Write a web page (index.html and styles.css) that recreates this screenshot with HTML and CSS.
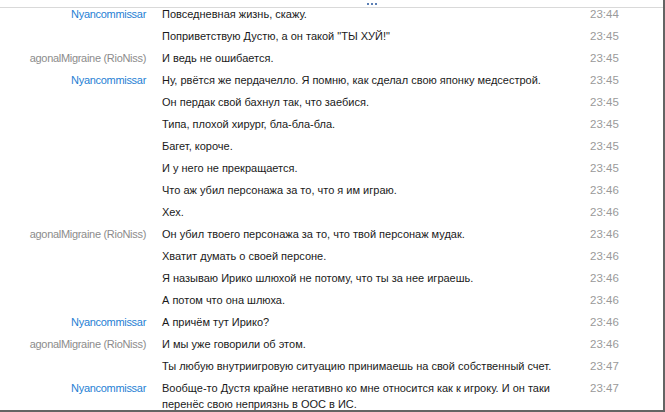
FILE: index.html
```html
<!DOCTYPE html>
<html>
<head>
<meta charset="utf-8">
<link rel="stylesheet" href="styles.css">
</head>
<body>
<div class="frame">
  <div class="header"><span class="dots"><i></i><i></i><i></i></span></div>
  <div class="log">
    <div class="row"><span class="name nyan">Nyancommissar</span><span class="msg">Повседневная жизнь, скажу.</span><span class="time">23:44</span></div>
    <div class="row"><span class="name"></span><span class="msg">Поприветствую Дустю, а он такой "ТЫ ХУЙ!"</span><span class="time">23:45</span></div>
    <div class="row"><span class="name agon">agonalMigraine (RioNiss)</span><span class="msg">И ведь не ошибается.</span><span class="time">23:45</span></div>
    <div class="row"><span class="name nyan">Nyancommissar</span><span class="msg">Ну, рвётся же пердачелло. Я помню, как сделал свою японку медсестрой.</span><span class="time">23:45</span></div>
    <div class="row"><span class="name"></span><span class="msg">Он пердак свой бахнул так, что заебися.</span><span class="time">23:45</span></div>
    <div class="row"><span class="name"></span><span class="msg">Типа, плохой хирург, бла-бла-бла.</span><span class="time">23:45</span></div>
    <div class="row"><span class="name"></span><span class="msg">Багет, короче.</span><span class="time">23:45</span></div>
    <div class="row"><span class="name"></span><span class="msg">И у него не прекращается.</span><span class="time">23:45</span></div>
    <div class="row"><span class="name"></span><span class="msg">Что аж убил персонажа за то, что я им играю.</span><span class="time">23:46</span></div>
    <div class="row"><span class="name"></span><span class="msg">Хех.</span><span class="time">23:46</span></div>
    <div class="row"><span class="name agon">agonalMigraine (RioNiss)</span><span class="msg">Он убил твоего персонажа за то, что твой персонаж мудак.</span><span class="time">23:46</span></div>
    <div class="row"><span class="name"></span><span class="msg">Хватит думать о своей персоне.</span><span class="time">23:46</span></div>
    <div class="row"><span class="name"></span><span class="msg">Я называю Ирико шлюхой не потому, что ты за нее играешь.</span><span class="time">23:46</span></div>
    <div class="row"><span class="name"></span><span class="msg">А потом что она шлюха.</span><span class="time">23:46</span></div>
    <div class="row"><span class="name nyan">Nyancommissar</span><span class="msg">А причём тут Ирико?</span><span class="time">23:46</span></div>
    <div class="row"><span class="name agon">agonalMigraine (RioNiss)</span><span class="msg">И мы уже говорили об этом.</span><span class="time">23:46</span></div>
    <div class="row"><span class="name"></span><span class="msg">Ты любую внутриигровую ситуацию принимаешь на свой собственный счет.</span><span class="time">23:47</span></div>
    <div class="row"><span class="name nyan">Nyancommissar</span><span class="msg">Вообще-то Дустя крайне негативно ко мне относится как к игроку. И он таки перенёс свою неприязнь в ООС в ИС.</span><span class="time">23:47</span></div>
  </div>
</div>
</body>
</html>
```
FILE: styles.css
```css
html, body {
  margin: 0;
  padding: 0;
  background: #ffffff;
}
.frame {
  width: 663px;
  height: 410px;
  border-right: 2px solid #646464;
  border-bottom: 2px solid #646464;
  overflow: hidden;
  font-family: "Liberation Sans", Arial, sans-serif;
  font-size: 11px;
  color: #1a1a1a;
}
.header {
  height: 7px;
  border-bottom: 1px solid #d9d9d9;
  display: flex;
  justify-content: center;
  padding-left: 80px;
}
.dots {
  display: flex;
  gap: 2px;
  padding-top: 3px;
}
.dots i {
  display: block;
  width: 2px;
  height: 2px;
  background: #5b7fb5;
}
.log {
  display: flex;
  flex-direction: column;
  margin-top: -2px;
}
.row {
  display: grid;
  grid-template-columns: 146px 400px 60px;
  column-gap: 16px;
  line-height: 16px;
  padding-bottom: 6px;
}
.name {
  text-align: right;
  white-space: nowrap;
  letter-spacing: -0.3px;
}
.nyan { color: #1f7fd4; }
.agon { color: #8c8c8c; }
.time {
  color: #9a9a9a;
  padding-left: 12px;
  font-size: 11.5px;
}
```
